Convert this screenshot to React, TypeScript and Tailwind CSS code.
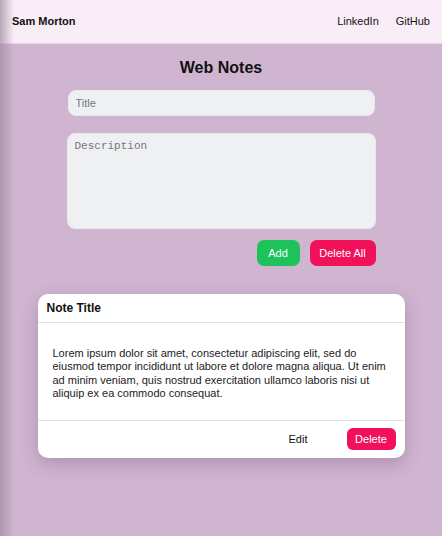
import * as React from "react"

const sans = { fontFamily: '"Liberation Sans", Arial, sans-serif' }

export default function App() {
  const [title, setTitle] = React.useState("")
  const [desc, setDesc] = React.useState("")

  return (
    <div className="relative min-h-[536px] bg-[#d0b5d0] text-[#111]" style={sans}>
      {/* left edge shade */}
      <div className="pointer-events-none absolute inset-y-0 left-0 w-[14px] bg-gradient-to-r from-[#9d8a9d] to-transparent opacity-70" />

      <nav className="flex h-[44px] items-center justify-between border-b border-[#e6d3e2] bg-[#f9edf7] pl-[12px] pr-[12px]">
        <span className="text-[11px] font-bold">Sam Morton</span>
        <div className="flex gap-[17px] text-[11px]">
          <a>LinkedIn</a>
          <a>GitHub</a>
        </div>
      </nav>

      <main className="flex flex-col items-center">
        <h1 className="mt-[13px] text-[16px] font-bold leading-[22px]">Web Notes</h1>

        <div className="mt-[11px] flex w-[309px] flex-col">
          <input
            value={title}
            onChange={(e) => setTitle(e.target.value)}
            placeholder="Title"
            className="mx-[1px] h-[26px] rounded-[8px] border border-[#e8e9ec] bg-[#eef0f2] px-[7px] text-[11px] outline-none placeholder:text-[#777]"
          />
          <textarea
            value={desc}
            onChange={(e) => setDesc(e.target.value)}
            placeholder="Description"
            className="mt-[17px] h-[96px] resize-none rounded-[8px] border border-[#e8e9ec] bg-[#eef0f2] px-[7px] py-[4px] text-[11px] outline-none placeholder:text-[#777]"
            style={{ fontFamily: '"Liberation Mono", "Courier New", monospace' }}
          />
          <div className="mt-[11px] flex justify-end gap-[10px]">
            <button className="h-[26px] w-[43px] rounded-[7px] bg-[#1ec25a] text-[11px] text-white">Add</button>
            <button className="h-[26px] w-[66px] rounded-[7px] bg-[#f1115b] text-[11px] text-white">Delete All</button>
          </div>
        </div>

        <section className="mt-[28px] w-[367px] rounded-[10px] bg-white shadow-[0_6px_18px_rgba(80,40,80,0.25)]">
          <header className="flex h-[29px] items-center border-b border-[#e2e2e2] px-[9px]">
            <h2 className="text-[12px] font-bold">Note Title</h2>
          </header>
          <p className="border-b border-[#e2e2e2] pb-[19px] pl-[15px] pr-[10px] pt-[24px] text-[11px] leading-[13.4px] text-[#222]">
            Lorem ipsum dolor sit amet, consectetur adipiscing elit, sed do eiusmod tempor incididunt ut labore et dolore
            magna aliqua. Ut enim ad minim veniam, quis nostrud exercitation ullamco laboris nisi ut aliquip ex ea
            commodo consequat.
          </p>
          <footer className="flex h-[37px] items-center justify-end gap-[39px] px-[9px]">
            <button className="text-[11px]">Edit</button>
            <button className="h-[22px] w-[49px] rounded-[6px] bg-[#f1115b] text-[11px] text-white">Delete</button>
          </footer>
        </section>
      </main>
    </div>
  )
}
